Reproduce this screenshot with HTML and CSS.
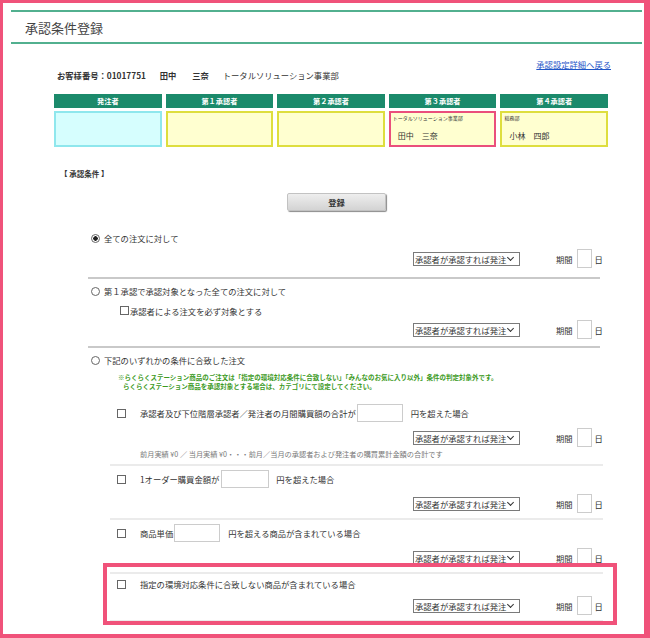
FILE: index.html
```html
<!DOCTYPE html>
<html lang="ja">
<head>
    <meta charset="UTF-8">
    <meta name="viewport" content="width=device-width, initial-scale=1.0">
    <title>承認条件登録</title>
    <link rel="stylesheet" href="styles.css">
</head>
<body>
<div class="frame">
    <div class="page-head">
        <h1 class="page-title">承認条件登録</h1>
    </div>

    <div class="content">
        <div class="back-link"><a href="#">承認設定詳細へ戻る</a></div>
        <div class="customer">
            <span class="strong">お客様番号：01017751</span>
            <span class="strong name">田中</span>
            <span class="strong name2">三奈</span>
            <span class="dept">トータルソリューション事業部</span>
        </div>

        <div class="approvers">
            <div class="ap-head">発注者</div>
            <div class="ap-head">第１承認者</div>
            <div class="ap-head">第２承認者</div>
            <div class="ap-head">第３承認者</div>
            <div class="ap-head">第４承認者</div>
            <div class="ap-cell orderer"></div>
            <div class="ap-cell"></div>
            <div class="ap-cell"></div>
            <div class="ap-cell selected">
                <div class="ap-dept">トータルソリューション事業部</div>
                <div class="ap-name">田中　三奈</div>
            </div>
            <div class="ap-cell">
                <div class="ap-dept">総務部</div>
                <div class="ap-name">小林　四郎</div>
            </div>
        </div>

        <div class="cond-title">【 承認条件 】</div>
        <div class="btn-row"><button class="button">登録</button></div>

        <div class="conditions">
            <!-- 全ての注文 -->
            <div class="cond cond-first">
                <label class="cond-label"><input type="radio" name="cond" class="radio" checked>全ての注文に対して</label>
                <div class="opt-row">
                    <span class="select-wrap"><select><option>承認者が承認すれば発注</option></select></span>
                    <span class="period">期間</span>
                    <input type="text" class="days">
                    <span class="unit">日</span>
                </div>
            </div>

            <!-- 第1承認 -->
            <div class="cond cond-second">
                <label class="cond-label"><input type="radio" name="cond" class="radio">第１承認で承認対象となった全ての注文に対して</label>
                <label class="check-line"><input type="checkbox" class="check">承認者による注文を必ず対象とする</label>
                <div class="opt-row">
                    <span class="select-wrap"><select><option>承認者が承認すれば発注</option></select></span>
                    <span class="period">期間</span>
                    <input type="text" class="days">
                    <span class="unit">日</span>
                </div>
            </div>

            <!-- いずれかの条件 -->
            <div class="cond cond-last">
                <label class="cond-label"><input type="radio" name="cond" class="radio">下記のいずれかの条件に合致した注文</label>
                <div class="green-note">※らくらくステーション商品のご注文は「指定の環境対応条件に合致しない」「みんなのお気に入り以外」条件の判定対象外です。<br>らくらくステーション商品を承認対象とする場合は、カテゴリにて設定してください。</div>

                <div class="sub-rows">
                    <div class="sub sub-first">
                        <div class="sub-line">
                            <input type="checkbox" class="check">
                            <span>承認者及び下位階層承認者／発注者の月間購買額の合計が</span>
                            <input type="text" class="amount">
                            <span>円を超えた場合</span>
                        </div>
                        <div class="opt-row">
                            <span class="select-wrap"><select><option>承認者が承認すれば発注</option></select></span>
                            <span class="period">期間</span>
                            <input type="text" class="days">
                            <span class="unit">日</span>
                        </div>
                        <div class="gray-note">前月実績 ¥0 ／ 当月実績 ¥0・・・前月／当月の承認者および発注者の購買累計金額の合計です</div>
                    </div>

                    <div class="sub">
                        <div class="sub-line">
                            <input type="checkbox" class="check">
                            <span>1オーダー購買金額が</span>
                            <input type="text" class="amount wide">
                            <span>円を超えた場合</span>
                        </div>
                        <div class="opt-row">
                            <span class="select-wrap"><select><option>承認者が承認すれば発注</option></select></span>
                            <span class="period">期間</span>
                            <input type="text" class="days">
                            <span class="unit">日</span>
                        </div>
                    </div>

                    <div class="sub">
                        <div class="sub-line">
                            <input type="checkbox" class="check">
                            <span>商品単価</span>
                            <input type="text" class="amount">
                            <span>円を超える商品が含まれている場合</span>
                        </div>
                        <div class="opt-row">
                            <span class="select-wrap"><select><option>承認者が承認すれば発注</option></select></span>
                            <span class="period">期間</span>
                            <input type="text" class="days">
                            <span class="unit">日</span>
                        </div>
                    </div>

                    <div class="sub">
                        <div class="sub-line short">
                            <input type="checkbox" class="check">
                            <span>指定の環境対応条件に合致しない商品が含まれている場合</span>
                        </div>
                        <div class="opt-row">
                            <span class="select-wrap"><select><option>承認者が承認すれば発注</option></select></span>
                            <span class="period">期間</span>
                            <input type="text" class="days">
                            <span class="unit">日</span>
                        </div>
                    </div>
                </div>
            </div>
        </div>
    </div>

    <div class="highlight"></div>
</div>
</body>
</html>
```

FILE: styles.css
```css
body {
    margin: 0;
    padding: 0;
    font-family: "Noto Sans CJK JP", "Noto Sans", sans-serif;
    font-size: 8.3px;
    color: #333;
}
.frame {
    position: relative;
    width: 650px;
    height: 638px;
    box-sizing: border-box;
    border-style: solid;
    border-color: #f0527a;
    border-width: 3px 6px 4px 3px;
    background-color: #fff;
    overflow: hidden;
}
.page-head {
    margin: 7px 2px 0 8px;
    height: 30px;
    border-top: 2px solid #52b08f;
    border-bottom: 2px solid #52b08f;
    display: flex;
    align-items: center;
}
.page-title {
    margin: 0 0 0 14px;
    font-size: 13px;
    font-weight: normal;
    color: #444;
}
.content {
    padding: 0 33px 0 51px;
}
.back-link {
    margin-top: 15px;
    height: 10px;
    line-height: 10px;
    text-align: right;
}
.back-link a {
    color: #1f56c8;
}
.customer {
    line-height: 12px;
    padding-left: 3px;
}
.customer .strong {
    font-weight: bold;
}
.customer .name {
    margin-left: 12px;
}
.customer .name2 {
    margin-left: 14px;
}
.customer .dept {
    margin-left: 12px;
}
.approvers {
    margin-top: 13px;
    width: 554px;
    display: grid;
    grid-template-columns: repeat(5, 1fr);
    grid-template-rows: 14px 36px;
    column-gap: 4px;
    row-gap: 3px;
}
.ap-head {
    background-color: #1b8a6b;
    color: #fff;
    font-weight: bold;
    font-size: 7.2px;
    line-height: 14px;
    text-align: center;
}
.ap-cell {
    border: 2px solid #dede3e;
    background-color: #ffffd0;
    padding: 2px;
    box-sizing: border-box;
}
.ap-cell.orderer {
    border-color: #8fe7ed;
    background-color: #d6fefe;
}
.ap-cell.selected {
    border-color: #ea4f7c;
}
.ap-dept {
    font-size: 5px;
    line-height: 6px;
}
.ap-name {
    font-size: 8px;
    line-height: 10px;
    margin-top: 10px;
    padding-left: 5px;
}
.cond-title {
    margin-top: 21px;
    padding-left: 6px;
    line-height: 12px;
    font-size: 7.5px;
    font-weight: bold;
}
.btn-row {
    margin-top: 13px;
    padding-left: 233px;
}
.button {
    width: 99px;
    height: 18px;
    padding: 0;
    font-family: inherit;
    font-size: 8.3px;
    font-weight: bold;
    color: #333;
    background: linear-gradient(#eeeeee, #d3d3d3);
    border: 1px solid #c2c2c2;
    border-radius: 2px;
    box-shadow: 1px 1px 1px #8a8a8a;
    cursor: pointer;
}
.conditions {
    margin: 20px 0 0 34px;
    width: 512px;
}
.cond {
    padding: 5px 0 9px;
    border-bottom: 2px solid #c9c9c9;
}
.cond-first {
    padding-top: 0;
}
.cond-second {
    padding-bottom: 7px;
}
.cond-last {
    border-bottom: none;
    padding-bottom: 0;
}
.cond-label {
    display: flex;
    align-items: center;
    height: 14px;
}
.radio {
    appearance: none;
    width: 9px;
    height: 9px;
    margin: 0 4px 0 3px;
    box-sizing: border-box;
    border: 1px solid #666;
    border-radius: 50%;
    background-color: #fff;
}
.radio:checked {
    background: radial-gradient(circle, #222 0 2px, #fff 2.5px);
}
.check {
    appearance: none;
    width: 9px;
    height: 9px;
    margin: 0;
    box-sizing: border-box;
    border: 1px solid #666;
    background-color: #fff;
}
.check-line {
    display: flex;
    align-items: center;
    height: 13px;
    margin-top: 6px;
    padding-left: 32px;
}
.check-line .check {
    margin-right: 1px;
}
.opt-row {
    display: flex;
    align-items: center;
    height: 19px;
    margin-top: 4px;
    padding-left: 325px;
    white-space: nowrap;
}
.opt-row > * {
    flex-shrink: 0;
}
.check-line + .opt-row {
    margin-top: 3px;
}
.select-wrap {
    position: relative;
    display: inline-block;
    width: 107px;
    height: 14px;
}
.select-wrap select {
    appearance: none;
    width: 107px;
    height: 14px;
    box-sizing: border-box;
    border: 1px solid #7a7a7a;
    border-radius: 0;
    padding: 0 0 0 1px;
    font-family: inherit;
    font-size: 8.3px;
    line-height: 12px;
    color: #333;
    background-color: #fff;
}
.select-wrap::after {
    content: "";
    position: absolute;
    right: 7px;
    top: 3px;
    width: 4px;
    height: 4px;
    border-right: 1.5px solid #333;
    border-bottom: 1.5px solid #333;
    transform: rotate(45deg);
    pointer-events: none;
}
.period {
    margin-left: 36px;
}
.days {
    width: 15px;
    height: 19px;
    box-sizing: border-box;
    margin: 0 0 0 4px;
    padding: 0;
    border: 1px solid #ccc;
}
.unit {
    margin-left: 3px;
}
.green-note {
    margin-top: 6px;
    padding-left: 35px;
    text-indent: -5px;
    font-size: 6.5px;
    line-height: 9px;
    font-weight: bold;
    color: #3c9a1e;
}
.sub-rows {
    margin: 0 -3px 0 22px;
}
.sub {
    padding: 4px 0 5px 7px;
    border-bottom: 2px solid #ebebeb;
}
.sub-first {
    padding-top: 13px;
}
.sub-line {
    display: flex;
    align-items: center;
    height: 18px;
}
.sub-line.short {
    height: 12px;
}
.sub-line .check {
    margin-right: 14px;
}
.sub .opt-row {
    margin-top: 6px;
    padding-left: 296px;
}
.amount {
    width: 46px;
    height: 18px;
    box-sizing: border-box;
    margin: 0 8px 0 1px;
    padding: 0;
    border: 1px solid #ccc;
}
.amount.wide {
    width: 48px;
    margin-left: 2px;
    margin-right: 7px;
}
.gray-note {
    margin-top: 2px;
    padding-left: 23px;
    line-height: 10px;
    font-size: 7.2px;
    color: #777;
}
.highlight {
    position: absolute;
    left: 100px;
    top: 560px;
    width: 514px;
    height: 62px;
    box-sizing: border-box;
    border: 4px solid #f0527a;
    pointer-events: none;
}
```
